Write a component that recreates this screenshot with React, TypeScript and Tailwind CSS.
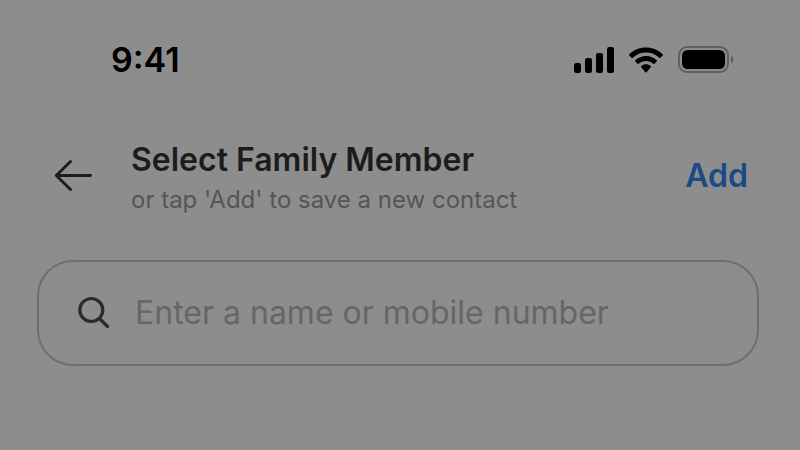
import React, { useState } from 'react';

function SignalIcon() {
  return (
    <svg width="40" height="26" viewBox="0 0 40 26" fill="currentColor" aria-hidden="true">
      <rect x="0" y="16" width="7" height="10" rx="2.2" />
      <rect x="11" y="11" width="7" height="15" rx="2.2" />
      <rect x="22" y="6" width="7" height="20" rx="2.2" />
      <rect x="33" y="0" width="7" height="26" rx="2.2" />
    </svg>
  );
}

function WifiIcon() {
  return (
    <svg width="34" height="26" viewBox="0 0 34 26" fill="currentColor" aria-hidden="true">
      <path d="M17 .5C23.5.5 29.5 3 33.700 7.200c.4.4.4.9 0 1.300l-2.300 2.300c-.4.4-.8.4-1.200 0C26.600 7.500 22 5.600 17 5.600S7.400 7.500 3.800 10.800c-.4.4-.8.4-1.200 0L.3 8.500c-.4-.4-.4-.9 0-1.300C4.500 3 10.500.5 17 .5z" />
      <path d="M17 9c4.100 0 7.900 1.600 10.700 4.300.4.4.4.8 0 1.200l-2.300 2.300c-.4.4-.8.4-1.200 0-2-1.800-4.500-2.800-7.200-2.800s-5.200 1-7.200 2.800c-.4.4-.8.4-1.200 0l-2.300-2.300c-.4-.4-.4-.8 0-1.200C9.100 10.600 12.900 9 17 9z" />
      <path d="M17 17.300c1.800 0 3.400.6 4.700 1.700.5.4.5.9.1 1.300l-4.200 4.900c-.4.4-.8.4-1.200 0l-4.200-4.900c-.4-.4-.4-.9.1-1.300 1.300-1.100 2.900-1.700 4.700-1.700z" />
    </svg>
  );
}

function BatteryIcon() {
  return (
    <svg width="57" height="28" viewBox="0 0 57 28" fill="none" aria-hidden="true">
      <rect x="1" y="1" width="49" height="25" rx="8" stroke="#5f5f5f" strokeWidth="2" />
      <rect x="4" y="4" width="43" height="19" rx="5.5" fill="#000" />
      <path d="M53 9.500c3 1.500 3 6.500 0 8z" fill="#5f5f5f" />
    </svg>
  );
}

function StatusBar() {
  return (
    <div className="flex h-10 items-center justify-between pr-[65px] pl-[111px] text-black">
      <span className="text-[34px] leading-10 font-semibold">9:41</span>
      <div className="flex items-center gap-[15px]">
        <SignalIcon />
        <WifiIcon />
        <BatteryIcon />
      </div>
    </div>
  );
}

export default function App() {
  const [query, setQuery] = useState('');

  return (
    <main className="min-h-screen bg-[#8d8d8d] pt-10 font-['Inter',sans-serif]">
      <StatusBar />

      <header className="mt-[60px] flex items-center pr-[52px] pl-[54px]">
        <button type="button" aria-label="Back" className="pb-2 text-[#1c1c1c]">
          <svg width="39" height="32" viewBox="0 0 39 32" fill="none" stroke="currentColor" strokeWidth="2.8" strokeLinecap="round" strokeLinejoin="round">
            <path d="M36.5 15.500H2.300M16.500 1.500L2.300 15.500l14.200 14" />
          </svg>
        </button>
        <div className="ml-[38px] flex-1">
          <h1 className="text-[32px] leading-10 font-semibold text-[#1c1c1c]">Select Family Member</h1>
          <p className="text-2xl leading-10 text-[#555555]">or tap 'Add' to save a new contact</p>
        </div>
        <button type="button" className="pb-2 text-[32px] leading-10 font-semibold text-[#1a4b86]">
          Add
        </button>
      </header>

      {/* Search field */}
      <label className="mt-10 mr-[41px] ml-[37px] flex h-[106px] items-center gap-6 rounded-[36px] border-2 border-[#6f6f6f] px-[38px]">
        <svg width="34" height="34" viewBox="0 0 34 34" fill="none" stroke="#2b2b2b" strokeWidth="3.2" strokeLinecap="round" aria-hidden="true">
          <circle cx="14.300" cy="14" r="11.500" />
          <path d="M22.500 22.500l8 8" />
        </svg>
        <input
          type="text"
          aria-label="Name or mobile number"
          placeholder="Enter a name or mobile number"
          value={query}
          onChange={(e) => setQuery(e.target.value)}
          className="min-w-0 flex-1 bg-transparent text-[32px] leading-10 text-[#1c1c1c] outline-none placeholder:text-[#666666]"
        />
      </label>
    </main>
  );
}
